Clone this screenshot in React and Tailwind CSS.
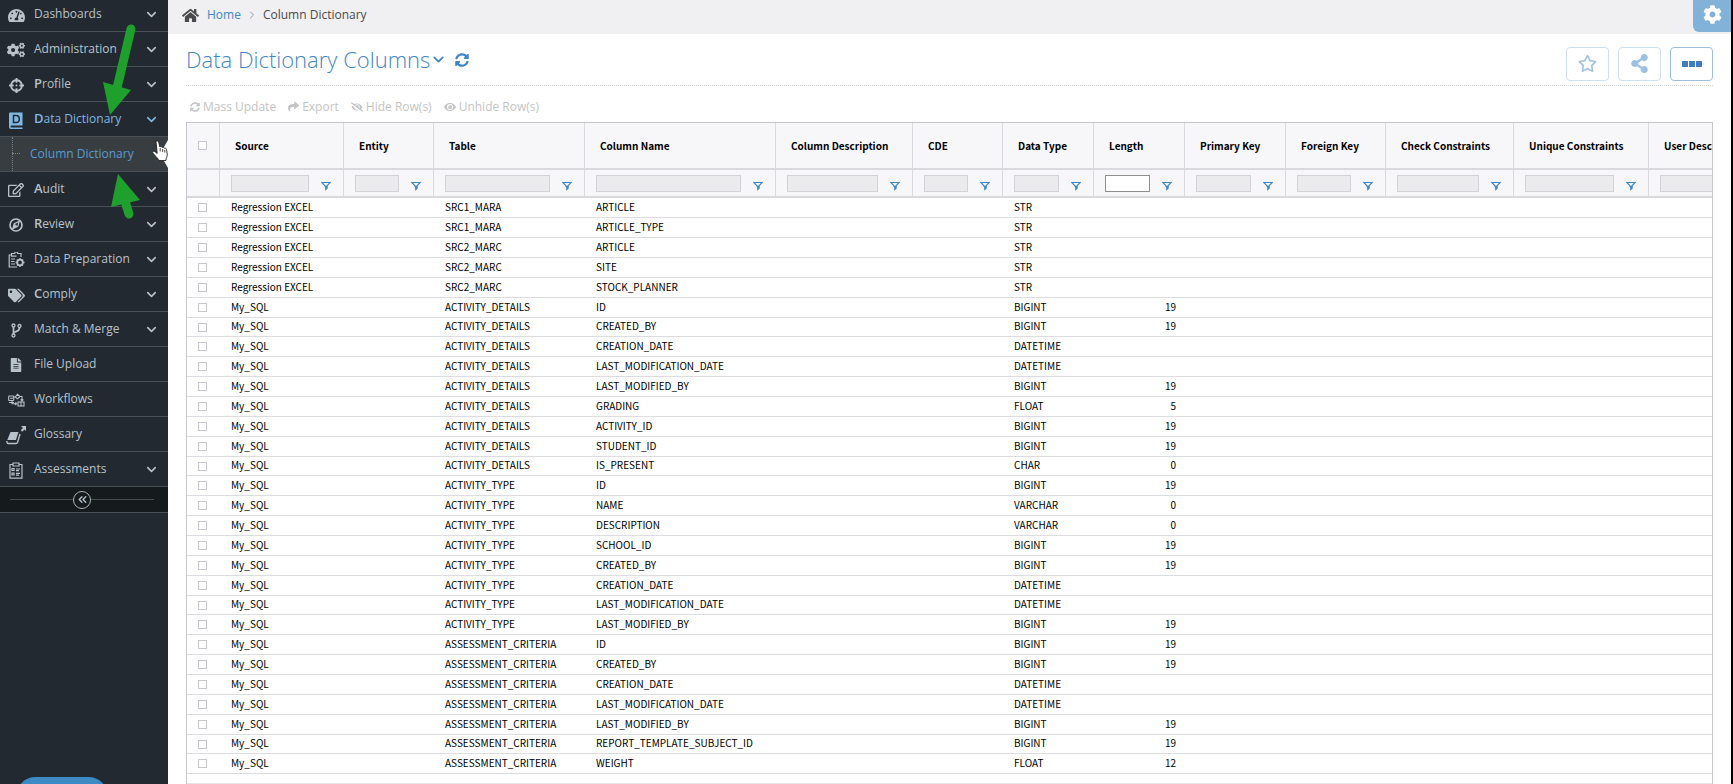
import React, { useState } from "react";
import { ChevronDown, ChevronRight, ChevronsLeft } from "lucide-react";
import {
	FaTachometerAlt, FaCogs, FaCrosshairs, FaRegEdit, FaTags, FaFileAlt, FaHome,
	FaSyncAlt, FaShare, FaEyeSlash, FaEye, FaRegStar, FaShareAlt, FaCog,
} from "react-icons/fa";

const DictionaryIcon = () => (
	<svg viewBox="0 0 14 17" className="w-[14px] h-[17px]" fill="none">
		<path d="M1 0.5h12.5v13H2.5a1 1 0 0 0 0 2h11V17H2a2 2 0 0 1-2-2V1.5a1 1 0 0 1 1-1z" fill="currentColor" />
		<path d="M4.5 3.5h2.6c2 0 3.2 1.2 3.2 3.4s-1.2 3.6-3.2 3.6H4.5z" stroke="#222930" strokeWidth="1.5" />
	</svg>
);

const CompassIcon = () => (
	<svg viewBox="0 0 14 14" className="w-[14px] h-[14px]" fill="none" stroke="currentColor">
		<circle cx="7" cy="7" r="6" strokeWidth="1.7" />
		<path d="M10.2 3.4 8.8 8.4 3.8 10.6 5.2 5.6z" strokeWidth="1.2" />
		<path d="M5.2 5.6 8.8 8.4 3.8 10.6z" fill="currentColor" stroke="none" />
	</svg>
);

const PrepIcon = () => (
	<svg viewBox="0 0 17 16" className="w-[17px] h-4" fill="none" stroke="currentColor" strokeWidth="1.2">
		<path d="M3.5 3V1.5h3.2a1.5 1.5 0 0 1 3 0H13V5M3.5 3H1.2v12H9M3.5 3v1.2h5" />
		<path d="M3 7h4M3 9.5h3.5M3 12h4" />
		<circle cx="12" cy="10.5" r="2.8" strokeWidth="1.8" />
		<path d="M12 6v2M12 13v2M7.6 10.5h1.5M15 10.5h1.5M9 7.5l1 1M15 7.5l-1 1M9 13.5l1-1M15 13.5l-1-1" strokeWidth="1.4" />
	</svg>
);

const BranchIcon = () => (
	<svg viewBox="0 0 11 15" className="w-[11px] h-[15px]" fill="none" stroke="currentColor">
		<circle cx="2.5" cy="2.5" r="1.5" strokeWidth="1.3" />
		<circle cx="8.5" cy="3" r="1.5" strokeWidth="1.3" />
		<circle cx="2.5" cy="12.5" r="1.5" strokeWidth="1.3" />
		<path d="M2.5 4v7M8.5 4.5c0 3.5-2 3.5-4 4.2-1.2.4-1.8.8-1.8 1.8" strokeWidth="1.7" />
	</svg>
);

const WorkflowIcon = () => (
	<svg viewBox="0 0 17 14" className="w-[17px] h-[14px]" fill="none" stroke="currentColor" strokeWidth="1.1">
		<rect x="0.7" y="3" width="5" height="4.5" rx="0.5" />
		<path d="M2 5.2h3M5.7 4h1.5l2.3-2.7L12 3.5 9.5 5.8 7.5 4.2M12 3.5h2v4M12.7 6.3 14 7.8l1.3-1.5" />
		<path d="M1 9.5h5M9.5 10.8H7M8.3 9.4 6.8 10.8l1.5 1.4M4 8v2.8h2.5" />
		<rect x="10" y="9" width="6" height="4" />
		<path d="M13 9v4" />
	</svg>
);

const GlossaryIcon = () => (
	<svg viewBox="0 0 20 20" className="w-5 h-5 shrink-0" fill="none">
		<path d="M4.500 7h8l-2.600 8H1.300z" fill="currentColor" />
		<path d="M1 16c-.3 1.700.3 2.500 1.500 2.500h7.500c.8 0 1.300-.4 1.600-1.200L14 9" stroke="currentColor" strokeWidth="1.4" />
		<path d="M15 1h5v5l-1.5-1.5-2.3 2.3-1.500-1.500L17 2.900z" fill="currentColor" />
	</svg>
);

const AssessmentIcon = () => (
	<svg viewBox="0 0 14 17" className="w-[14px] h-[17px]" fill="none" stroke="currentColor" strokeWidth="1.2">
		<path d="M4 2.5H1v13.7h12V2.5h-3M4 1h6v3H4z" />
		<path d="M3 6.5h2v2H3zM3 11h2v2H3zM7 7h4M7 8.7h3M7 11.3h4M7 13.2h3" />
	</svg>
);

const FunnelIcon = () => (
	<svg viewBox="0 0 10 10" className="w-[10px] h-[10px]" fill="none">
		<path d="M0.8 1.5h8.4L5 6z" stroke="#3f86c6" strokeWidth="1.1" />
		<path d="M3.5 5h3.2v2.5L4.2 9.8V6.5z" fill="#3f86c6" />
	</svg>
);

const menu = [
	{ label: "Dashboards", icon: <FaTachometerAlt size={17} />, open: true },
	{ label: "Administration", icon: <FaCogs size={18} />, open: true },
	{ label: "Profile", icon: <FaCrosshairs size={15} />, open: true, strong: true },
	{ label: "Data Dictionary", icon: <DictionaryIcon />, open: true, strong: true, active: true, child: "Column Dictionary" },
	{ label: "Audit", icon: <FaRegEdit size={16} />, open: true, strong: true },
	{ label: "Review", icon: <CompassIcon />, open: true, strong: true },
	{ label: "Data Preparation", icon: <PrepIcon />, open: true },
	{ label: "Comply", icon: <FaTags size={17} />, open: true, strong: true },
	{ label: "Match & Merge", icon: <BranchIcon />, open: true },
	{ label: "File Upload", icon: <FaFileAlt size={14} /> },
	{ label: "Workflows", icon: <WorkflowIcon /> },
	{ label: "Glossary", icon: <GlossaryIcon /> },
	{ label: "Assessments", icon: <AssessmentIcon />, open: true },
];

const columns = [
	{ name: "Source", key: "source", width: "w-[124px]" },
	{ name: "Entity", width: "w-[90px]" },
	{ name: "Table", key: "table", width: "w-[151px]" },
	{ name: "Column Name", key: "column", width: "w-[191px]" },
	{ name: "Column Description", width: "w-[137px]" },
	{ name: "CDE", width: "w-[90px]" },
	{ name: "Data Type", key: "type", width: "w-[91px]" },
	{ name: "Length", key: "length", width: "w-[91px]", enabled: true, numeric: true },
	{ name: "Primary Key", width: "w-[101px]" },
	{ name: "Foreign Key", width: "w-[100px]" },
	{ name: "Check Constraints", width: "w-[128px]" },
	{ name: "Unique Constraints", width: "w-[135px]" },
	{ name: "User Description", width: "w-[140px]" },
];

const groups = [
	["Regression EXCEL", "SRC1_MARA", [["ARTICLE", "STR"], ["ARTICLE_TYPE", "STR"]]],
	["Regression EXCEL", "SRC2_MARC", [["ARTICLE", "STR"], ["SITE", "STR"], ["STOCK_PLANNER", "STR"]]],
	["My_SQL", "ACTIVITY_DETAILS", [
		["ID", "BIGINT", 19],
		["CREATED_BY", "BIGINT", 19],
		["CREATION_DATE", "DATETIME"],
		["LAST_MODIFICATION_DATE", "DATETIME"],
		["LAST_MODIFIED_BY", "BIGINT", 19],
		["GRADING", "FLOAT", 5],
		["ACTIVITY_ID", "BIGINT", 19],
		["STUDENT_ID", "BIGINT", 19],
		["IS_PRESENT", "CHAR", 0],
	]],
	["My_SQL", "ACTIVITY_TYPE", [
		["ID", "BIGINT", 19],
		["NAME", "VARCHAR", 0],
		["DESCRIPTION", "VARCHAR", 0],
		["SCHOOL_ID", "BIGINT", 19],
		["CREATED_BY", "BIGINT", 19],
		["CREATION_DATE", "DATETIME"],
		["LAST_MODIFICATION_DATE", "DATETIME"],
		["LAST_MODIFIED_BY", "BIGINT", 19],
	]],
	["My_SQL", "ASSESSMENT_CRITERIA", [
		["ID", "BIGINT", 19],
		["CREATED_BY", "BIGINT", 19],
		["CREATION_DATE", "DATETIME"],
		["LAST_MODIFICATION_DATE", "DATETIME"],
		["LAST_MODIFIED_BY", "BIGINT", 19],
		["REPORT_TEMPLATE_SUBJECT_ID", "BIGINT", 19],
		["WEIGHT", "FLOAT", 12],
	]],
];

const rows = groups.flatMap(([source, table, items]) =>
	items.map(([column, type, length]) => ({ source, table, column, type, length }))
);

const checkbox = "block appearance-none w-[9px] h-[9px] ml-[11px] border border-[#c9c7cd] bg-white checked:bg-[#3f86c6]";

function MenuItem({ item }) {
	return (
		<li>
			<button
				type="button"
				className={`flex items-center w-full h-[35px] pl-[7px] pr-[9px] border-b border-[#485058] text-xs text-left ${item.active ? "text-[#80b8e4]" : "text-[#b9c2cb]"}`}
			>
				<span className="flex items-center justify-center w-[18px] mr-[9px] pt-[2px]">{item.icon}</span>
				<span className="flex-1 whitespace-nowrap">
					{item.strong ? <><b className="font-semibold text-[13px]">{item.label[0]}</b>{item.label.slice(1)}</> : item.label}
				</span>
				{item.open && <ChevronDown size={15} strokeWidth={2.5} />}
			</button>
			{item.child && (
				<a href="#columns" className="relative flex items-center h-[35px] pl-[30px] border-b border-[#485058] bg-[#373d41] text-xs text-[#5b9bd0]">
					<span className="absolute left-3 inset-y-0 border-l border-dotted border-[#7b838a]" />
					<span className="absolute left-3 top-4 w-2 border-t border-dotted border-[#7b838a]" />
					{item.child}
					<svg viewBox="0 0 8 28" className="absolute right-0 top-[3px] w-2 h-7"><path d="M8 0 0 14 8 28z" fill="#fff" /></svg>
				</a>
			)}
		</li>
	);
}

function Sidebar() {
	return (
		<nav className="relative w-[168px] shrink-0 bg-[#222930] overflow-hidden">
			<ul className="-mt-[3px]">
				{menu.map((item) => <MenuItem key={item.label} item={item} />)}
			</ul>
			<div className="flex items-center h-[26px] pl-[10px] pr-[14px] bg-[#151a1d] border-b border-[#485058] text-[#b9c2cb]">
				<span className="flex-1 border-t border-[#454c52]" />
				<button type="button" aria-label="Collapse menu" className="flex items-center justify-center w-[18px] h-[18px] border border-[#aab2b9] rounded-full">
					<ChevronsLeft size={13} strokeWidth={2.5} />
				</button>
				<span className="flex-1 border-t border-[#454c52]" />
			</div>
			<button type="button" aria-label="Help" className="absolute left-4 -bottom-8 w-[92px] h-[39px] rounded-[20px] bg-[#3d8ac5]" />

			{/* pointers to the open section */}
			<svg viewBox="0 0 168 230" className="absolute left-0 top-0 w-[168px] h-[230px] pointer-events-none">
				<g stroke="#1fa02c" strokeWidth="9" strokeLinecap="round" fill="#1fa02c">
					<path d="M131 29 117 88" />
					<path d="M110 115 103 82 131 90z" stroke="none" />
					<path d="M129 214 124 198" />
					<path d="M118 174 111 207 140 200z" stroke="none" />
				</g>
				<path
					d="M156 142c0-1.5 2.4-1.5 2.7 0l1.2 5c.8-.8 2-.5 2.2.4 1-.5 2-.1 2.2.8 1.2-.3 2 .2 2.2 1.3l.7 4.4c.2 2-.3 3.2-1 4.4l-.3 2.2h-7.2l-.8-2c-2-1.5-3.6-3.6-5-5.4-.9-1.2.6-2.5 1.9-1.5l2.4 1.8z"
					fill="#fff" stroke="#222" strokeWidth="0.9" strokeLinejoin="round"
				/>
				<path d="M160.2 148v3.5M162.7 149v3M164.8 150v2.5" stroke="#222" strokeWidth="0.8" />
			</svg>
		</nav>
	);
}

function ColumnsTable() {
	const [length, setLength] = useState("");

	return (
		<div className="flex-1 min-h-0 overflow-hidden border border-b-0 border-[#c6c5c9]">
			<table className="table-fixed border-separate border-spacing-0 w-[1602px] text-[10px] text-black font-['Noto_Sans_CJK_SC',sans-serif]">
				<thead className="bg-[#f7f6f9]">
					<tr className="h-[47px]">
						<th className="w-[33px] p-0 border-b-2 border-r border-[#dad9dd]">
							<input type="checkbox" aria-label="Select all" className={checkbox} />
						</th>
						{columns.map((col) => (
							<th key={col.name} className={`${col.width} p-0 pl-[15px] border-b-2 border-r border-[#dad9dd] font-bold text-left whitespace-nowrap`}>
								{col.name}
							</th>
						))}
					</tr>
					<tr className="h-7">
						<td className="p-0 border-b-2 border-r border-[#dad9dd]" />
						{columns.map((col) => (
							<td key={col.name} className="p-0 border-b-2 border-r border-[#dad9dd]">
								<div className="flex items-center gap-3 pl-[11px] pr-3">
									{col.enabled ? (
										<input
											aria-label={`Filter ${col.name}`}
											value={length}
											onChange={(e) => setLength(e.target.value)}
											className="flex-1 min-w-0 h-[17px] px-1 border border-[#8f8f8f] bg-white"
										/>
									) : (
										<input aria-label={`Filter ${col.name}`} disabled className="flex-1 min-w-0 h-[17px] px-1 border border-[#d3d2d6] bg-[#ebeaed]" />
									)}
									<button type="button" aria-label={`Filter options for ${col.name}`} className="pt-[6px]"><FunnelIcon /></button>
								</div>
							</td>
						))}
					</tr>
				</thead>
				<tbody>
					{rows.map((row, i) => (
						<tr key={i} className={i % 7 === 6 ? "h-[19px]" : "h-5"}>
							<td className="p-0 border-b border-[#dddce0]">
								<input type="checkbox" aria-label={`Select ${row.table} ${row.column}`} className={checkbox} />
							</td>
							{columns.map((col) => (
								<td key={col.name} className={`p-0 pb-[2px] border-b border-[#dddce0] leading-4 whitespace-nowrap ${col.numeric ? "text-right pr-[9px]" : "pl-[11px]"}`}>
									{row[col.key]}
								</td>
							))}
						</tr>
					))}
					<tr className="h-[10px]">
						<td colSpan={14} className="p-0 border-b border-[#e6e5e8]" />
					</tr>
				</tbody>
			</table>
		</div>
	);
}

export default function App() {
	return (
		<div className="flex h-screen overflow-hidden bg-white border-r-2 border-black font-['Open_Sans',sans-serif]">
			<Sidebar />
			<main className="flex flex-col flex-1 min-w-0">
				<header className="flex items-start justify-between h-[34px] bg-[#f0eff2]">
					<div className="flex items-center h-[30px] pl-[14px] text-xs text-[#4a4a4a]">
						<FaHome size={17} />
						<a href="#home" className="ml-2 text-[#3f86c6]">Home</a>
						<ChevronRight size={12} className="mx-[5px] text-[#9a9a9a]" />
						<span>Column Dictionary</span>
					</div>
					<button type="button" aria-label="Settings" className="flex items-center justify-center w-[38px] h-8 pb-1 rounded-bl-md bg-[#82b2d8] text-white">
						<FaCog size={19} />
					</button>
				</header>

				<div className="flex flex-col flex-1 min-h-0 px-[18px]">
					<div className="flex items-center justify-between h-[52px] border-b border-dotted border-[#d5d5d5] text-[#3f86c6]">
						<div className="flex items-center">
							<h1 className="text-[22px] font-light">Data Dictionary Columns</h1>
							<button type="button" aria-label="Views"><ChevronDown size={17} strokeWidth={2.5} /></button>
							<button type="button" aria-label="Refresh" className="ml-2"><FaSyncAlt size={14} /></button>
						</div>
						<div className="flex gap-[9px] pt-2">
							<button type="button" aria-label="Favourite" className="flex items-center justify-center w-[43px] h-[34px] border border-[#cfe0ef] rounded text-[#9dc1e2]">
								<FaRegStar size={19} />
							</button>
							<button type="button" aria-label="Share" className="flex items-center justify-center w-[43px] h-[34px] border border-[#cfe0ef] rounded text-[#9dc1e2]">
								<FaShareAlt size={19} />
							</button>
							<button type="button" aria-label="More" className="flex items-center justify-center gap-px w-[43px] h-[34px] border border-[#9dbfdd] rounded">
								<span className="w-[6px] h-[6px] bg-[#3f7fc0]" />
								<span className="w-[6px] h-[6px] bg-[#3f7fc0]" />
								<span className="w-[6px] h-[6px] bg-[#3f7fc0]" />
							</button>
						</div>
					</div>

					<div className="flex items-center gap-3 h-9 pt-[5px] pl-1 text-xs text-[#c4c4c4]">
						<button type="button" className="flex items-center gap-[3px]"><FaSyncAlt size={10} />Mass Update</button>
						<button type="button" className="flex items-center gap-[3px]"><FaShare size={11} />Export</button>
						<button type="button" className="flex items-center gap-[3px]"><FaEyeSlash size={12} />Hide Row(s)</button>
						<button type="button" className="flex items-center gap-[3px]"><FaEye size={12} />Unhide Row(s)</button>
					</div>

					<ColumnsTable />
				</div>
			</main>
		</div>
	);
}
